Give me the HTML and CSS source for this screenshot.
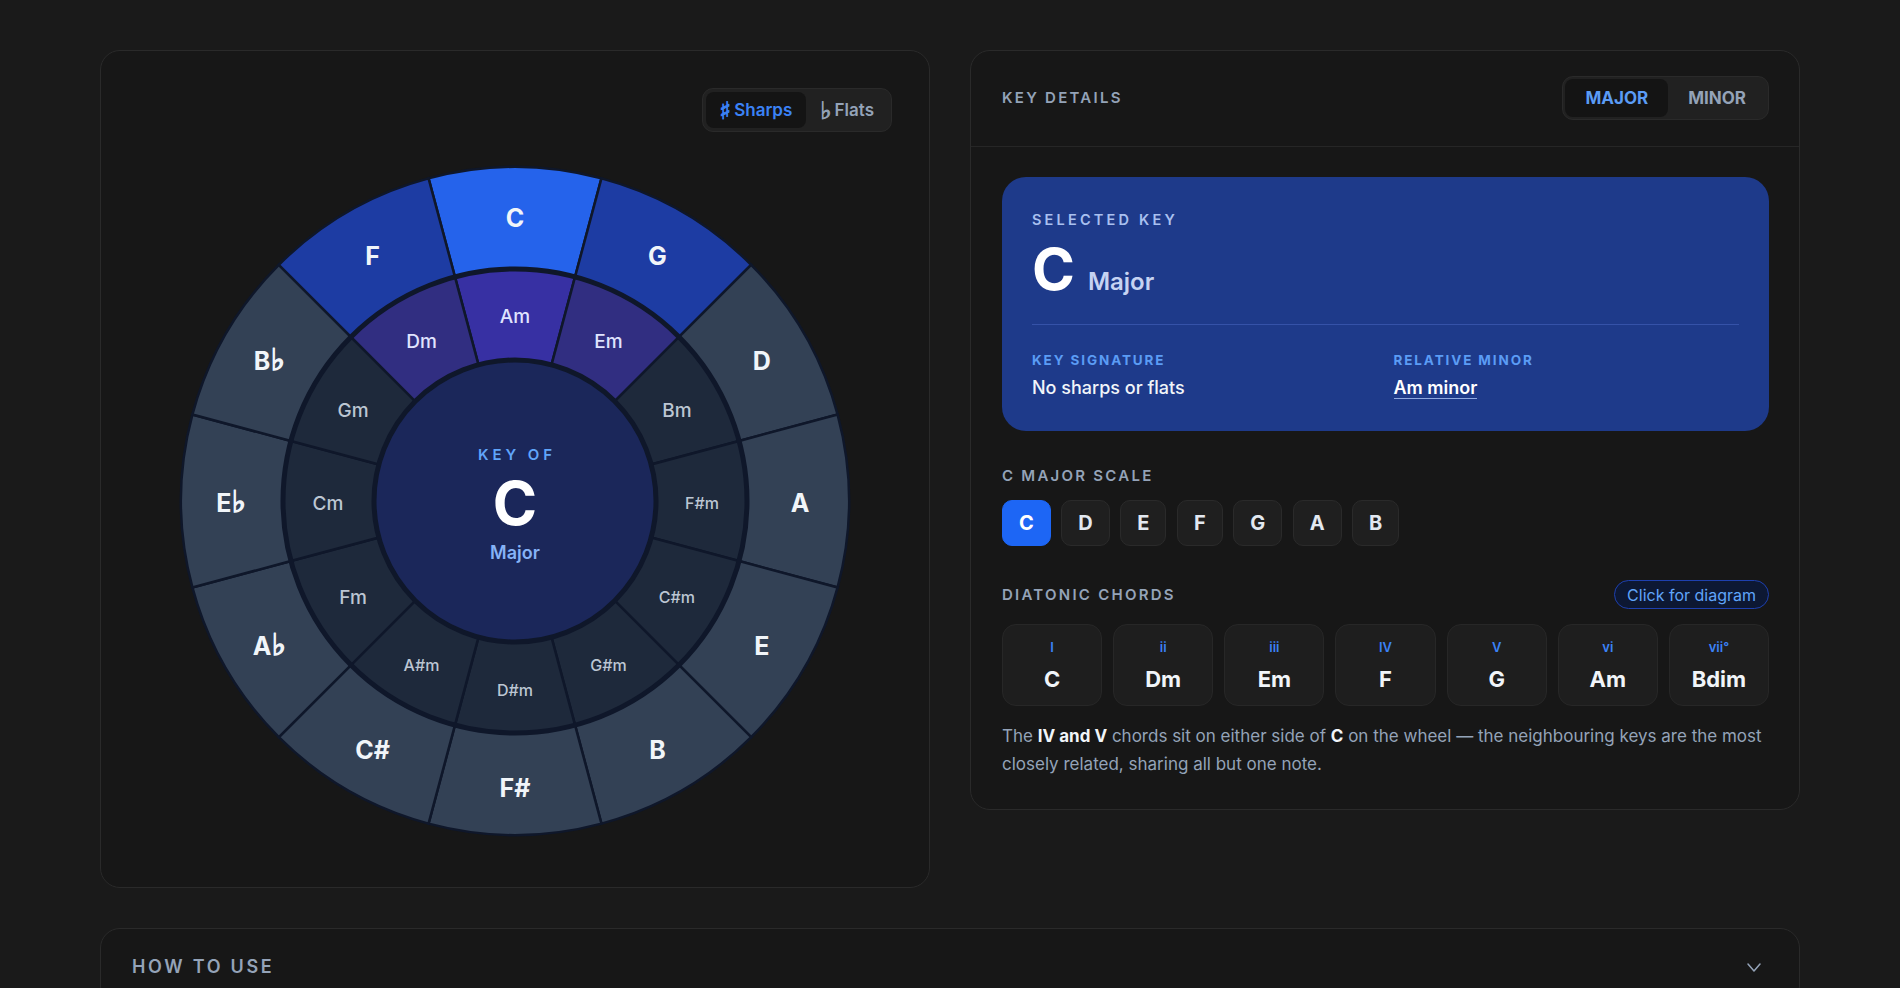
FILE: index.html
```html
<!DOCTYPE html>
<html lang="en">
<head>
  <meta charset="UTF-8">
  <meta name="viewport" content="width=device-width, initial-scale=1.0">
  <title>Circle of Fifths</title>
  <link rel="stylesheet" href="styles.css">
</head>
<body>
  <main class="page">
    <div class="top-grid">
      <section class="card wheel-card">
        <div class="wheel-toolbar">
          <div class="toggle">
            <button class="toggle-btn active"><span class="acc">♯</span>Sharps</button>
            <button class="toggle-btn"><span class="acc">♭</span>Flats</button>
          </div>
        </div>
        <svg id="wheel" class="wheel" width="680" height="680" viewBox="0 0 680 680"></svg>
      </section>

      <section class="card details-card">
        <div class="details-head">
          <h2 class="section-label">Key Details</h2>
          <div class="toggle mode-toggle">
            <button class="toggle-btn active">Major</button>
            <button class="toggle-btn">Minor</button>
          </div>
        </div>
        <div class="details-body">
          <div class="selected-key">
            <div class="sk-label">Selected Key</div>
            <div class="sk-name"><span class="sk-note">C</span><span class="sk-mode">Major</span></div>
            <div class="sk-meta">
              <div>
                <div class="meta-label">Key Signature</div>
                <div class="meta-value">No sharps or flats</div>
              </div>
              <div>
                <div class="meta-label">Relative Minor</div>
                <div class="meta-value"><a class="rel-link" href="#">Am minor</a></div>
              </div>
            </div>
          </div>

          <h3 class="section-label scale-label">C Major Scale</h3>
          <div class="scale-notes">
            <button class="note active">C</button>
            <button class="note">D</button>
            <button class="note">E</button>
            <button class="note">F</button>
            <button class="note">G</button>
            <button class="note">A</button>
            <button class="note">B</button>
          </div>

          <div class="chords-head">
            <h3 class="section-label">Diatonic Chords</h3>
            <button class="diagram-btn">Click for diagram</button>
          </div>
          <div class="chords">
            <div class="chord"><span class="num">I</span><span class="name">C</span></div>
            <div class="chord"><span class="num">ii</span><span class="name">Dm</span></div>
            <div class="chord"><span class="num">iii</span><span class="name">Em</span></div>
            <div class="chord"><span class="num">IV</span><span class="name">F</span></div>
            <div class="chord"><span class="num">V</span><span class="name">G</span></div>
            <div class="chord"><span class="num">vi</span><span class="name">Am</span></div>
            <div class="chord"><span class="num">vii°</span><span class="name">Bdim</span></div>
          </div>
          <p class="chord-note">The <b>IV and V</b> chords sit on either side of <b>C</b> on the wheel — the neighbouring keys are the most closely related, sharing all but one note.</p>
        </div>
      </section>
    </div>

    <section class="card howto">
      <h2 class="section-label howto-title">How to use</h2>
      <svg class="chevron" width="14" height="9" viewBox="0 0 14 9"><path d="M1 1l6 7 6-7" fill="none" stroke="#94a3b8" stroke-width="1.5" stroke-linecap="round" stroke-linejoin="round"/></svg>
    </section>
  </main>

  <script>
    const svg = document.getElementById("wheel");
    const NS = "http://www.w3.org/2000/svg";
    const cx = 340, cy = 341;
    const majors = ["C", "G", "D", "A", "E", "B", "F#", "C#", "A♭", "E♭", "B♭", "F"];
    const minors = ["Am", "Em", "Bm", "F#m", "C#m", "G#m", "D#m", "A#m", "Fm", "Cm", "Gm", "Dm"];

    function add(tag, attrs, text, parent) {
      const el = document.createElementNS(NS, tag);
      for (const k in attrs) el.setAttribute(k, attrs[k]);
      if (text) el.textContent = text;
      (parent || svg).appendChild(el);
      return el;
    }

    function pt(r, deg) {
      const a = deg * Math.PI / 180;
      return [cx + r * Math.cos(a), cy + r * Math.sin(a)];
    }

    function segment(r1, r2, a1, a2) {
      const [x1, y1] = pt(r2, a1), [x2, y2] = pt(r2, a2);
      const [x3, y3] = pt(r1, a2), [x4, y4] = pt(r1, a1);
      return `M${x1} ${y1} A${r2} ${r2} 0 0 1 ${x2} ${y2} L${x3} ${y3} A${r1} ${r1} 0 0 0 ${x4} ${y4} Z`;
    }

    // 0 = selected key, 1 and 11 = its neighbours
    function level(i) {
      if (i === 0) return "sel";
      if (i === 1 || i === 11) return "near";
      return "";
    }

    majors.forEach((name, i) => {
      const mid = -90 + i * 30;
      add("path", { d: segment(232, 334, mid - 15, mid + 15), class: "seg-major " + level(i) });
    });
    minors.forEach((name, i) => {
      const mid = -90 + i * 30;
      add("path", { d: segment(141, 232, mid - 15, mid + 15), class: "seg-minor " + level(i) });
    });
    add("circle", { cx, cy, r: 232, class: "ring-line" });
    add("circle", { cx, cy, r: 141, class: "center-disc" });

    majors.forEach((name, i) => {
      const [x, y] = pt(285, -90 + i * 30);
      if (name.includes("♭")) {
        const t = add("text", { x: x + 1, y: y + 11, class: "maj-label" }, name[0]);
        add("tspan", { class: "flat" }, "♭", t);
      } else {
        add("text", { x, y: y + 11, class: "maj-label" }, name);
      }
    });
    minors.forEach((name, i) => {
      const [x, y] = pt(187, -90 + i * 30);
      const small = name.length > 2;
      add("text", { x, y: y + (small ? 8 : 9), class: "min-label " + level(i) + (small ? " small" : "") }, name);
    });

    add("text", { x: cx + 2, y: cy - 41, class: "center-kicker" }, "KEY OF");
    add("text", { x: cx, y: cy + 24, class: "center-note" }, "C");
    add("text", { x: cx, y: cy + 58, class: "center-mode" }, "Major");
  </script>
</body>
</html>
```

FILE: styles.css
```css
* {
  box-sizing: border-box;
}
body {
  margin: 0;
  background: #1a1a1a;
  color: #e2e8f0;
  font-family: Inter, "Noto Sans", sans-serif;
}
button {
  font-family: inherit;
  cursor: pointer;
}
.page {
  max-width: 1700px;
  margin: 0 auto;
  padding: 50px 0 40px;
}
.top-grid {
  display: grid;
  grid-template-columns: 1fr 1fr;
  gap: 40px;
  align-items: start;
}
.card {
  background: #171717;
  border: 1px solid #2a2a2a;
  border-radius: 20px;
}
.section-label {
  margin: 0;
  font-size: 15px;
  line-height: 20px;
  font-weight: 600;
  letter-spacing: 0.15em;
  text-transform: uppercase;
  color: #94a3b8;
}

/* toggles */
.toggle {
  display: flex;
  background: #212121;
  border: 1px solid #2a2a2a;
  border-radius: 11px;
  padding: 3px;
}
.toggle-btn {
  display: flex;
  align-items: center;
  background: none;
  border: 0;
  height: 36px;
  padding: 0 14px;
  border-radius: 8px;
  font-size: 17px;
  font-weight: 600;
  color: #94a3b8;
}
.toggle-btn.active {
  background: #141414;
  color: #3b82f6;
}
.toggle-btn .acc {
  font-family: "DejaVu Sans", sans-serif;
  font-size: 24px;
  line-height: 1;
  font-weight: 700;
  -webkit-text-stroke: 0.9px currentColor;
  margin: 1px 3px 0 0;
}
.mode-toggle {
  padding: 2px;
}
.mode-toggle .toggle-btn {
  height: 38px;
  padding: 0 20px;
  text-transform: uppercase;
  font-weight: 700;
}
.mode-toggle .toggle-btn.active {
  color: #5b9cf5;
}

/* wheel */
.wheel-card {
  height: 838px;
  padding: 37px 37px 47px;
  display: flex;
  flex-direction: column;
  align-items: center;
}
.wheel-toolbar {
  align-self: stretch;
  display: flex;
  justify-content: flex-end;
  margin-bottom: 28px;
}
.wheel {
  display: block;
}
.seg-major {
  fill: #334155;
  stroke: #0f172a;
  stroke-width: 2.5;
}
.seg-major.near {
  fill: #1d3ca3;
}
.seg-major.sel {
  fill: #2563eb;
}
.seg-minor {
  fill: #1e293b;
  stroke: #0f172a;
  stroke-width: 2.5;
}
.seg-minor.near {
  fill: #312e81;
}
.seg-minor.sel {
  fill: #3730a3;
}
.ring-line {
  fill: none;
  stroke: #0f172a;
  stroke-width: 5;
}
.center-disc {
  fill: #1b275a;
  stroke: #0f172a;
  stroke-width: 5;
}
.wheel text {
  text-anchor: middle;
  font-family: Inter, "DejaVu Sans", sans-serif;
}
.maj-label {
  font-size: 25px;
  font-weight: 700;
  fill: #f1f5f9;
}
.maj-label .flat {
  font-family: "DejaVu Sans", sans-serif;
  font-size: 30px;
  font-weight: 700;
  stroke: #f1f5f9;
  stroke-width: 1.4;
}
.min-label {
  font-size: 19px;
  font-weight: 500;
  fill: #bcc6d3;
}
.min-label.small {
  font-size: 16px;
}
.min-label.sel,
.min-label.near {
  fill: #e0e4ff;
}
.center-kicker {
  font-size: 15px;
  font-weight: 600;
  letter-spacing: 0.26em;
  fill: #60a5fa;
}
.center-note {
  font-size: 60px;
  font-weight: 700;
  fill: #ffffff;
}
.center-mode {
  font-size: 18px;
  font-weight: 600;
  fill: #86b3f7;
}

/* details */
.details-head {
  display: flex;
  justify-content: space-between;
  align-items: center;
  padding: 25px 30px 26px 31px;
  border-bottom: 1px solid #262626;
}
.details-body {
  padding: 30px 30px 31px 31px;
}
.selected-key {
  background: #1e3a8a;
  border-radius: 24px;
  padding: 33px 30px 30px;
}
.sk-label {
  font-size: 14.5px;
  line-height: 20px;
  font-weight: 600;
  letter-spacing: 0.22em;
  text-transform: uppercase;
  color: #a9c0f0;
}
.sk-name {
  display: flex;
  align-items: baseline;
  gap: 13px;
  margin-top: 10px;
  height: 58px;
}
.sk-note {
  font-size: 58px;
  line-height: 1;
  font-weight: 700;
  color: #ffffff;
}
.sk-mode {
  font-size: 24px;
  font-weight: 600;
  color: #c6d3f2;
}
.sk-meta {
  display: grid;
  grid-template-columns: 1fr 1fr;
  gap: 16px;
  margin-top: 26px;
  padding-top: 26px;
  border-top: 1px solid #3552a8;
}
.meta-label {
  font-size: 13.5px;
  line-height: 18px;
  font-weight: 700;
  letter-spacing: 0.14em;
  text-transform: uppercase;
  color: #5b9cf5;
}
.meta-value {
  margin-top: 6px;
  font-size: 18px;
  line-height: 26px;
  font-weight: 500;
  color: #f1f5f9;
}
.rel-link {
  color: #ffffff;
  font-weight: 600;
  text-decoration: none;
  border-bottom: 1px solid #8fa8e0;
}
.scale-label {
  margin-top: 35px;
}
.scale-notes {
  display: flex;
  gap: 10.5px;
  margin-top: 14px;
}
.note {
  height: 46px;
  padding: 0 16px;
  background: #1f1f1f;
  border: 1px solid #2a2a2a;
  border-radius: 10px;
  font-size: 20px;
  font-weight: 700;
  color: #e2e8f0;
}
.note.active {
  background: #1d66f5;
  border-color: #1d66f5;
  color: #ffffff;
}
.chords-head {
  display: flex;
  justify-content: space-between;
  align-items: center;
  margin-top: 34px;
}
.diagram-btn {
  height: 29px;
  padding: 0 12px;
  background: #0d1833;
  border: 1px solid #1e40af;
  border-radius: 999px;
  font-size: 16px;
  color: #60a5fa;
}
.chords {
  display: grid;
  grid-template-columns: repeat(7, 1fr);
  gap: 11px;
  margin-top: 15px;
}
.chord {
  height: 82px;
  background: #1e1e1e;
  border: 1px solid #272727;
  border-radius: 14px;
  display: flex;
  flex-direction: column;
  align-items: center;
  justify-content: center;
  gap: 11px;
}
.chord .num {
  font-size: 13px;
  line-height: 16px;
  font-weight: 600;
  color: #3b82f6;
}
.chord .name {
  font-size: 22px;
  line-height: 26px;
  font-weight: 700;
  color: #f1f5f9;
}
.chord-note {
  margin: 16px 0 0;
  font-size: 17px;
  line-height: 28px;
  color: #94a3b8;
}
.chord-note b {
  color: #f1f5f9;
  font-weight: 700;
}

/* how to use */
.howto {
  margin-top: 40px;
  display: flex;
  justify-content: space-between;
  align-items: center;
  padding: 28px 38px 28px 31px;
}
.howto-title {
  font-size: 18px;
  letter-spacing: 0.15em;
}
```
